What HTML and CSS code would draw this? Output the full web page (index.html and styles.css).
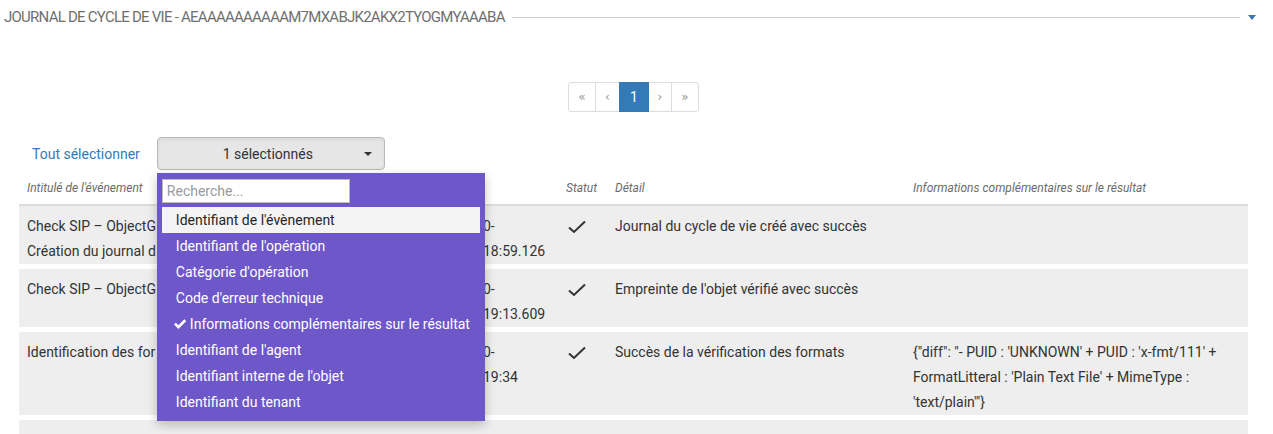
FILE: index.html
```html
<!DOCTYPE html>
<html lang="fr">
<head>
<meta charset="utf-8">
<title>Journal de cycle de vie</title>
<link rel="stylesheet" href="styles.css">
</head>
<body>
<div class="panel-head">
  <h1 class="title">Journal de cycle de vie - aeaaaaaaaaaam7mxabjk2akx2tyogmyaaaba</h1>
  <span class="rule"></span>
  <span class="toggle"></span>
</div>

<div class="pager-wrap">
  <ul class="pager">
    <li class="pg pg-w1">&laquo;</li>
    <li class="pg pg-w2">&lsaquo;</li>
    <li class="pg pg-w3 active">1</li>
    <li class="pg pg-w4">&rsaquo;</li>
    <li class="pg pg-w5">&raquo;</li>
  </ul>
</div>

<div class="toolbar">
  <a class="select-all" href="#">Tout sélectionner</a>
  <div class="ms">
    <button class="ms-btn" type="button"><span class="ms-label">1 sélectionnés</span><span class="caret"></span></button>
    <div class="ms-menu">
      <input class="ms-search" type="text" placeholder="Recherche...">
      <ul class="ms-list">
        <li class="ms-item hover">Identifiant de l'évènement</li>
        <li class="ms-item">Identifiant de l'opération</li>
        <li class="ms-item">Catégorie d'opération</li>
        <li class="ms-item">Code d'erreur technique</li>
        <li class="ms-item checked"><svg class="tick" viewBox="0 0 14 12" width="14" height="12"><path d="M1 6.6 L2.9 4.7 L5.4 7.2 L11.3 1.3 L13.2 3.2 L5.4 11 Z" fill="#fff"/></svg>Informations complémentaires sur le résultat</li>
        <li class="ms-item">Identifiant de l'agent</li>
        <li class="ms-item">Identifiant interne de l'objet</li>
        <li class="ms-item">Identifiant du tenant</li>
      </ul>
    </div>
  </div>
</div>

<table class="log">
  <colgroup>
    <col class="c-name"><col class="c-date"><col class="c-stat"><col class="c-det"><col class="c-info">
  </colgroup>
  <thead>
    <tr>
      <th><span class="clip">Intitulé de l'événement</span></th>
      <th></th>
      <th>Statut</th>
      <th>Détail</th>
      <th>Informations complémentaires sur le résultat</th>
    </tr>
  </thead>
  <tbody>
    <tr>
      <td><div class="clip">Check SIP – ObjectG</div><div class="clip">Création du journal d</div></td>
      <td class="date">0-<br>18:59.126</td>
      <td><svg class="ok" viewBox="0 0 20 14" width="20" height="14"><path d="M2 7.5 L7 12 L18 1.5" fill="none" stroke="#333" stroke-width="2"/></svg></td>
      <td>Journal du cycle de vie créé avec succès</td>
      <td></td>
    </tr>
    <tr>
      <td><div class="clip">Check SIP – ObjectG</div></td>
      <td class="date">0-<br>19:13.609</td>
      <td><svg class="ok" viewBox="0 0 20 14" width="20" height="14"><path d="M2 7.5 L7 12 L18 1.5" fill="none" stroke="#333" stroke-width="2"/></svg></td>
      <td>Empreinte de l'objet vérifié avec succès</td>
      <td></td>
    </tr>
    <tr>
      <td><div class="clip">Identification des for</div></td>
      <td class="date">0-<br>19:34</td>
      <td><svg class="ok" viewBox="0 0 20 14" width="20" height="14"><path d="M2 7.5 L7 12 L18 1.5" fill="none" stroke="#333" stroke-width="2"/></svg></td>
      <td>Succès de la vérification des formats</td>
      <td>{"diff": "- PUID : 'UNKNOWN' + PUID : 'x-fmt/111' + FormatLitteral : 'Plain Text File' + MimeType : 'text/plain'"}</td>
    </tr>
    <tr class="last">
      <td>&nbsp;</td><td></td><td></td><td></td><td></td>
    </tr>
  </tbody>
</table>
</body>
</html>
```

FILE: styles.css
```css
* { box-sizing: border-box; }
html, body { margin: 0; padding: 0; background: #fff; }
body {
  font-family: Roboto, "Liberation Sans", Arial, sans-serif;
  font-size: 14px;
  color: #333;
  overflow: hidden;
}

.panel-head {
  display: flex;
  align-items: center;
  height: 34px;
  padding: 0 17px 0 4px;
}
.title {
  margin: 0;
  font-size: 15px;
  font-weight: 400;
  text-transform: uppercase;
  color: #707070;
  white-space: nowrap;
  letter-spacing: -0.75px;
}
.rule {
  flex: 1;
  height: 1px;
  background: #cfcfcf;
  margin: 0 8px 0 7px;
}
.toggle {
  width: 0; height: 0;
  border-left: 4px solid transparent;
  border-right: 4px solid transparent;
  border-top: 5px solid #3a76b5;
}

.pager-wrap {
  display: flex;
  justify-content: center;
  padding: 48px 0 0 0;
  margin-left: -6px;
}
.pager {
  display: flex;
  list-style: none;
  margin: 0;
  padding: 0;
}
.pg {
  height: 30px;
  line-height: 28px;
  text-align: center;
  border: 1px solid #ddd;
  margin-left: -1px;
  color: #999;
  font-size: 12px;
  background: #fff;
  font-family: "DejaVu Sans", sans-serif;
}
.pg-w1 { width: 28px; border-radius: 3px 0 0 3px; margin-left: 0; }
.pg-w2 { width: 25px; }
.pg-w3 { width: 30px; }
.pg-w4 { width: 24px; }
.pg-w5 { width: 28px; border-radius: 0 3px 3px 0; }
.pg.active {
  background: #337ab7;
  border-color: #337ab7;
  color: #fff;
  font-size: 14px;
  font-family: Roboto, sans-serif;
  position: relative;
  z-index: 1;
}

.toolbar {
  display: flex;
  align-items: center;
  padding: 25px 0 0 32px;
}
.select-all {
  color: #337ab7;
  text-decoration: none;
  font-size: 14px;
}
.ms {
  position: relative;
  margin-left: 17px;
}
.ms-btn {
  display: flex;
  align-items: center;
  width: 228px;
  height: 33px;
  padding: 0 10px 0 12px;
  background: #e6e6e6;
  border: 1px solid #b9b9b9;
  border-radius: 4px;
  font-family: inherit;
  font-size: 14px;
  color: #333;
  box-shadow: inset 0 2px 4px rgba(0,0,0,0.06);
}
.ms-label { flex: 1; text-align: center; padding-left: 2px; }
.caret {
  width: 0; height: 0;
  border-left: 4px solid transparent;
  border-right: 4px solid transparent;
  border-top: 4px solid #333;
  margin-right: 2px;
}
.ms-menu {
  position: absolute;
  top: 36px;
  left: 0;
  width: 328px;
  background: #6e57c9;
  padding: 6px 5px 6px 5px;
  z-index: 5;
  box-shadow: 0 4px 10px rgba(0,0,0,0.22);
}
.ms-search {
  display: block;
  width: 188px;
  height: 24px;
  margin: 0 0 4px 0;
  padding: 0 4px;
  border: 1px solid #bcbcbc;
  font-family: inherit;
  font-size: 14px;
  color: #555;
  background: #fff;
  outline: none;
}
.ms-search::placeholder { color: #9a9a9a; }
.ms-list { list-style: none; margin: 0; padding: 0; }
.ms-item {
  height: 26px;
  line-height: 26px;
  padding-left: 14px;
  color: #fff;
  white-space: nowrap;
}
.ms-item.hover { background: #f4f4f4; color: #262626; }
.ms-item.checked { padding-left: 11px; }
.tick { margin-right: 3px; vertical-align: -1px; }

.log {
  margin: 2px 0 0 19px;
  width: 1229px;
  border-collapse: collapse;
  table-layout: fixed;
}
.c-name { width: 458px; }
.c-date { width: 81px; }
.c-stat { width: 49px; }
.c-det { width: 298px; }
.c-info { width: 343px; }
.log th {
  text-align: left;
  font-weight: 400;
  font-style: italic;
  font-size: 12px;
  color: #6b6b6b;
  padding: 8px 8px 7px 8px;
  line-height: 17px;
  border-bottom: 2px solid #dcdcdc;
}
.log td {
  vertical-align: top;
  background: #eee;
  padding: 8px 8px 0 8px;
  line-height: 25px;
  font-size: 14px;
  color: #333;
}
.log tbody tr + tr td { border-top: 5px solid #fff; }
.log td.date { white-space: nowrap; padding-left: 6px; }
.clip {
  display: block;
  width: 130px;
  overflow: hidden;
  white-space: nowrap;
}
.ok { display: block; margin: 6px 0 0 1px; }
```
